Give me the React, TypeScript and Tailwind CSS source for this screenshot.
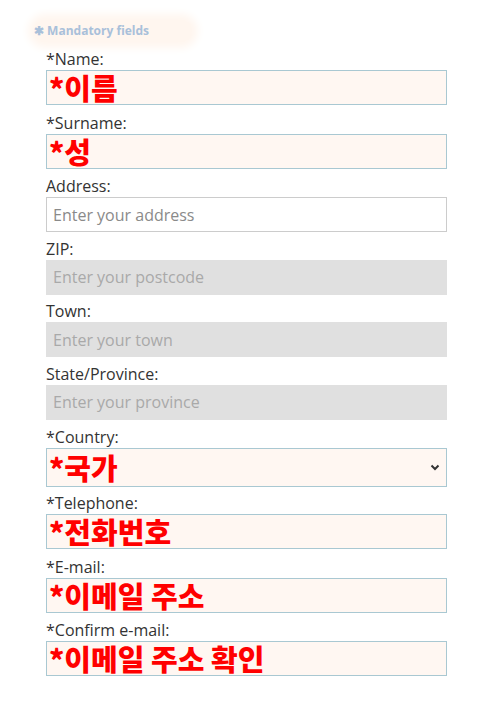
const labelCls = "block text-[16px] leading-[22px] text-[#333] font-['Open_Sans',sans-serif]";
const redCls =
  "w-full h-[35px] border border-[#a9c8d2] bg-[#fff7f2] px-[2px] text-[29px] leading-[35px] font-black text-[#ff0000] font-['Noto_Sans_CJK_KR',sans-serif] outline-none";
const plainCls =
  "w-full h-[35px] border px-[6px] text-[16px] font-['Open_Sans',sans-serif] outline-none placeholder:text-[#8a8a8a]";

function Red({ label, value }: { label: string; value: string }) {
  return (
    <div className="mb-[5.6px]">
      <label className={labelCls}>{label}</label>
      <input className={redCls} defaultValue={value} readOnly />
    </div>
  );
}

function Plain({ label, ph, disabled }: { label: string; ph: string; disabled?: boolean }) {
  return (
    <div className="mb-[5.6px]">
      <label className={labelCls}>{label}</label>
      <input
        className={
          plainCls +
          (disabled
            ? " bg-[#e0e0e0] border-[#e0e0e0] placeholder:text-[#a9a9a9]"
            : " bg-white border-[#cccccc]")
        }
        placeholder={ph}
      />
    </div>
  );
}

export default function App() {
  return (
    <div className="w-[491px] h-[714px] bg-white pt-[20px]">
      <div className="ml-[34px] w-[158px] h-[22px] rounded-full bg-[#fff6ef] shadow-[0_0_8px_6px_#fff6ef] flex items-center">
        <span className="text-[12px] font-bold text-[#a9c0da] font-['Open_Sans',sans-serif]">✱ Mandatory fields</span>
      </div>
      <div className="ml-[46px] w-[401px] mt-[6px]">
        <Red label="*Name:" value="*이름" />
        <Red label="*Surname:" value="*성" />
        <Plain label="Address:" ph="Enter your address" />
        <Plain label="ZIP:" ph="Enter your postcode" disabled />
        <Plain label="Town:" ph="Enter your town" disabled />
        <Plain label="State/Province:" ph="Enter your province" disabled />
        <div className="mb-[5.6px]">
          <label className={labelCls}>*Country:</label>
          <div className="w-full h-[39px] border border-[#a9c8d2] bg-[#fff7f2] px-[2px] flex items-center justify-between">
            <span className="text-[29px] font-black text-[#ff0000] font-['Noto_Sans_CJK_KR',sans-serif] leading-none">*국가</span>
            <svg width="10" height="7" viewBox="0 0 10 7" className="mr-[4px]">
              <path d="M1.5 1.5 L5 5 L8.5 1.5" stroke="#333" strokeWidth="2" fill="none" />
            </svg>
          </div>
        </div>
        <Red label="*Telephone:" value="*전화번호" />
        <Red label="*E-mail:" value="*이메일 주소" />
        <Red label="*Confirm e-mail:" value="*이메일 주소 확인" />
      </div>
    </div>
  );
}
